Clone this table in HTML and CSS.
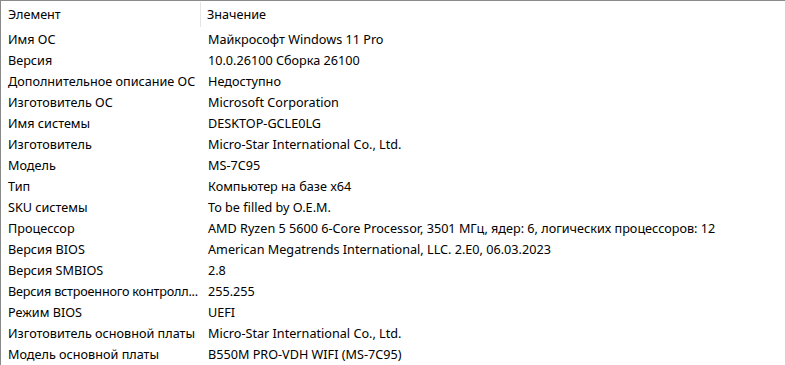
FILE: index.html
```html
<!DOCTYPE html>
<html lang="ru">
<head>
<meta charset="utf-8">
<link rel="stylesheet" href="styles.css">
</head>
<body>
<div class="list">
  <div class="header">
    <div class="hcell c1">Элемент</div>
    <div class="hcell c2">Значение</div>
  </div>
  <div class="row"><div class="c1">Имя ОС</div><div class="c2">Майкрософт Windows 11 Pro</div></div>
  <div class="row"><div class="c1">Версия</div><div class="c2">10.0.26100 Сборка 26100</div></div>
  <div class="row"><div class="c1">Дополнительное описание ОС</div><div class="c2">Недоступно</div></div>
  <div class="row"><div class="c1">Изготовитель ОС</div><div class="c2">Microsoft Corporation</div></div>
  <div class="row"><div class="c1">Имя системы</div><div class="c2">DESKTOP-GCLE0LG</div></div>
  <div class="row"><div class="c1">Изготовитель</div><div class="c2">Micro-Star International Co., Ltd.</div></div>
  <div class="row"><div class="c1">Модель</div><div class="c2">MS-7C95</div></div>
  <div class="row"><div class="c1">Тип</div><div class="c2">Компьютер на базе x64</div></div>
  <div class="row"><div class="c1">SKU системы</div><div class="c2">To be filled by O.E.M.</div></div>
  <div class="row"><div class="c1">Процессор</div><div class="c2">AMD Ryzen 5 5600 6-Core Processor, 3501 МГц, ядер: 6, логических процессоров: 12</div></div>
  <div class="row"><div class="c1">Версия BIOS</div><div class="c2">American Megatrends International, LLC. 2.E0, 06.03.2023</div></div>
  <div class="row"><div class="c1">Версия SMBIOS</div><div class="c2">2.8</div></div>
  <div class="row"><div class="c1 tight">Версия встроенного контролл...</div><div class="c2">255.255</div></div>
  <div class="row"><div class="c1">Режим BIOS</div><div class="c2">UEFI</div></div>
  <div class="row"><div class="c1">Изготовитель основной платы</div><div class="c2">Micro-Star International Co., Ltd.</div></div>
  <div class="row"><div class="c1">Модель основной платы</div><div class="c2">B550M PRO-VDH WIFI (MS-7C95)</div></div>
</div>
</body>
</html>
```
FILE: styles.css
```css
html, body {
  margin: 0;
  padding: 0;
  background: #ffffff;
}
body {
  width: 785px;
  height: 365px;
  overflow: hidden;
  font-family: "Noto Sans", "Open Sans", sans-serif;
  font-size: 12.65px;
  color: #000;
}
.list {
  border-top: 1px solid #8a8a8a;
  border-left: 1px solid #8a8a8a;
  height: 100%;
  box-sizing: border-box;
}
.header {
  display: flex;
  height: 26px;
  align-items: center;
  margin-bottom: 1px;
}
.hcell {
  height: 25px;
  display: flex;
  align-items: center;
}
.header .c1 {
  border-right: 1px solid #e5e5e5;
}
.row {
  display: flex;
  height: 21px;
  align-items: center;
}
.c1 {
  width: 200px;
  padding-left: 7px;
  box-sizing: border-box;
  white-space: nowrap;
  flex: none;
  overflow: hidden;
}
.c1.tight {
  letter-spacing: -0.2px;
}
.c2 {
  padding-left: 7px;
  white-space: nowrap;
}
.header .c2 {
  padding-left: 6px;
}
```
